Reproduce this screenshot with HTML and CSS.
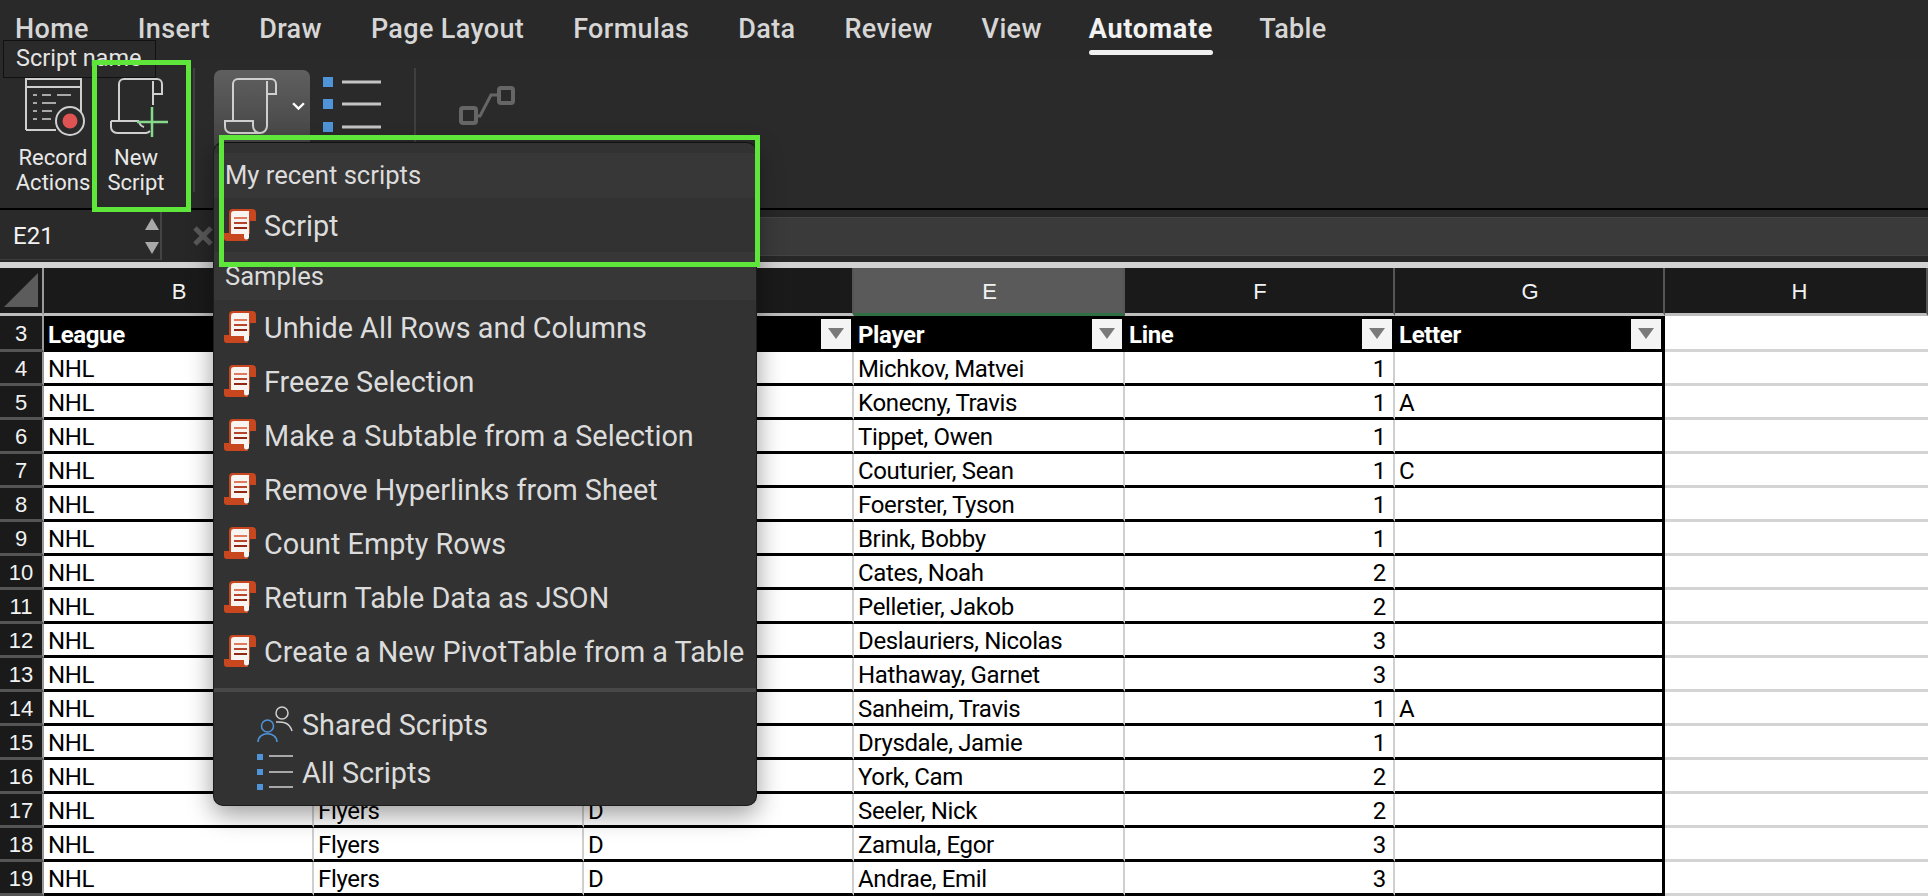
FILE: index.html
```html
<!DOCTYPE html>
<html lang="en">
<head>
<meta charset="utf-8">
<title>Automate tab</title>
<link rel="stylesheet" href="styles.css">
</head>
<body>
<svg class="defs" width="0" height="0">
  <symbol id="scroll" viewBox="0 0 60 60">
    <path d="M9 43V6a5 5 0 0 1 5-5h33a5 5 0 0 1 5 5v10h-9M43 3v45a7 7 0 0 1-7 7H7a6 6 0 0 1-6-6v-6h28v5a7 7 0 0 0 7 7" fill="none" stroke="currentColor" stroke-width="2"/>
  </symbol>
  <symbol id="doc" viewBox="0 0 32 32">
    <path d="M5 4a4 4 0 0 1 4-4h19a4 4 0 0 1 4 4v8h-6v13H5z" fill="#c9471f"/>
    <path d="M0 24h21l3 8H3a3 3 0 0 1-3-3z" fill="#c9471f"/>
    <path d="M10 2h15v26a2.500 2.500 0 0 1-5 0v-3H7V5a3 3 0 0 1 3-3z" fill="#f7f4f1"/>
    <rect x="10" y="8" width="13" height="2" fill="#e07a5c"/>
    <rect x="10" y="13" width="13" height="2" fill="#b5452a"/>
    <rect x="10" y="18" width="13" height="2" fill="#8f2712"/>
  </symbol>
</svg>

<header class="tabs">
  <span class="tab">Home</span><span class="tab">Insert</span><span class="tab">Draw</span><span class="tab">Page Layout</span><span class="tab">Formulas</span><span class="tab">Data</span><span class="tab">Review</span><span class="tab">View</span><span class="tab tab-active">Automate</span><span class="tab">Table</span>
</header>

<section class="ribbon">
  <div class="rib-btn rib-record">
    <svg class="ic-record" viewBox="0 0 62 60" width="62" height="60">
      <path d="M1 52V1h55v42M1 9h55M1 52h30" fill="none" stroke="#cfcfcf" stroke-width="2"/>
      <path d="M8 17h4M17 17h9M32 17h14M8 25h4M17 25h14M8 33h4M17 33h10M8 41h4M17 41h9" stroke="#a8a8a8" stroke-width="2"/>
      <circle cx="45" cy="43" r="14" fill="#2a2a2a" stroke="#cfcfcf" stroke-width="2"/>
      <circle cx="45" cy="43" r="7.500" fill="#e05353"/>
    </svg>
    <span class="rib-label">Record<br>Actions</span>
  </div>
  <div class="rib-btn rib-new">
    <svg class="ic-new" viewBox="0 0 60 60" width="60" height="60">
      <path d="M9 43V6a5 5 0 0 1 5-5h33a5 5 0 0 1 5 5v10h-9M43 3v24M1 43h28M1 43v6a6 6 0 0 0 6 6h29a7 7 0 0 0 4-2M29 43a7 7 0 0 0 5 6" fill="none" stroke="#cfcfcf" stroke-width="2"/>
      <path d="M42 29v30M27 44h31" fill="none" stroke="#86d98a" stroke-width="2.500"/>
    </svg>
    <span class="rib-label">New<br>Script</span>
  </div>
  <i class="rib-sep sep-a"></i>
  <div class="script-btn">
    <svg class="ic-scroll" width="60" height="60"><use href="#scroll"/></svg>
    <svg class="ic-chev" viewBox="0 0 12 8" width="13" height="9"><path d="M1 1l5 5 5-5" fill="none" stroke="#fff" stroke-width="2.200"/></svg>
  </div>
  <svg class="ic-list" viewBox="0 0 60 56" width="60" height="56">
    <rect x="0" y="0" width="10" height="10" fill="#4f94d8"/><rect x="0" y="22" width="10" height="10" fill="#4f94d8"/><rect x="0" y="45" width="10" height="10" fill="#4f94d8"/>
    <path d="M19 5h39M19 27h39M19 50h39" stroke="#c4c4c4" stroke-width="3"/>
  </svg>
  <i class="rib-sep sep-b"></i>
  <svg class="ic-flow" viewBox="0 0 56 40" width="56" height="40">
    <rect x="2" y="22" width="15" height="15" rx="2" fill="none" stroke="#666" stroke-width="4"/>
    <rect x="40" y="2" width="14" height="15" rx="2" fill="none" stroke="#666" stroke-width="4"/>
    <path d="M17 30h4l11-21h8" fill="none" stroke="#666" stroke-width="3"/>
  </svg>
</section>

<section class="formula">
  <div class="namebox">
    <span class="name-val">E21</span>
    <span class="spin"><i class="tri-up"></i><i class="tri-down"></i></span>
  </div>
  <svg class="fx-x" viewBox="0 0 20 20" width="20" height="20"><path d="M2 2l16 16M18 2L2 18" stroke="#5a5a5a" stroke-width="5"/></svg>
  <div class="fx-field"></div>
</section>

<main class="sheet">
  <table class="grid">
    <colgroup><col class="c-rh"><col class="c-n"><col class="c-n"><col class="c-n"><col class="c-e"><col class="c-n"><col class="c-n"><col></colgroup>
    <thead>
      <tr class="col-heads">
        <th class="corner"><i class="corner-tri"></i></th><th>B</th><th>C</th><th>D</th><th class="col-sel">E</th><th>F</th><th>G</th><th class="col-h">H</th>
      </tr>
    </thead>
    <tbody>
      <tr class="tbl-head">
        <th class="rh">3</th>
        <td><div class="hc"><span>League</span><i class="filter"></i></div></td>
        <td><div class="hc"><span></span><i class="filter"></i></div></td>
        <td><div class="hc"><span></span><i class="filter"></i></div></td>
        <td><div class="hc"><span>Player</span><i class="filter"></i></div></td>
        <td><div class="hc"><span>Line</span><i class="filter"></i></div></td>
        <td class="last"><div class="hc"><span>Letter</span><i class="filter"></i></div></td>
        <td class="free"></td>
      </tr>
      <tr><th class="rh">4</th><td>NHL</td><td></td><td></td><td>Michkov, Matvei</td><td class="num">1</td><td class="last"></td><td class="free"></td></tr>
      <tr><th class="rh">5</th><td>NHL</td><td></td><td></td><td>Konecny, Travis</td><td class="num">1</td><td class="last">A</td><td class="free"></td></tr>
      <tr><th class="rh">6</th><td>NHL</td><td></td><td></td><td>Tippet, Owen</td><td class="num">1</td><td class="last"></td><td class="free"></td></tr>
      <tr><th class="rh">7</th><td>NHL</td><td></td><td></td><td>Couturier, Sean</td><td class="num">1</td><td class="last">C</td><td class="free"></td></tr>
      <tr><th class="rh">8</th><td>NHL</td><td></td><td></td><td>Foerster, Tyson</td><td class="num">1</td><td class="last"></td><td class="free"></td></tr>
      <tr><th class="rh">9</th><td>NHL</td><td></td><td></td><td>Brink, Bobby</td><td class="num">1</td><td class="last"></td><td class="free"></td></tr>
      <tr><th class="rh">10</th><td>NHL</td><td></td><td></td><td>Cates, Noah</td><td class="num">2</td><td class="last"></td><td class="free"></td></tr>
      <tr><th class="rh">11</th><td>NHL</td><td></td><td></td><td>Pelletier, Jakob</td><td class="num">2</td><td class="last"></td><td class="free"></td></tr>
      <tr><th class="rh">12</th><td>NHL</td><td></td><td></td><td>Deslauriers, Nicolas</td><td class="num">3</td><td class="last"></td><td class="free"></td></tr>
      <tr><th class="rh">13</th><td>NHL</td><td></td><td></td><td>Hathaway, Garnet</td><td class="num">3</td><td class="last"></td><td class="free"></td></tr>
      <tr><th class="rh">14</th><td>NHL</td><td></td><td></td><td>Sanheim, Travis</td><td class="num">1</td><td class="last">A</td><td class="free"></td></tr>
      <tr><th class="rh">15</th><td>NHL</td><td></td><td></td><td>Drysdale, Jamie</td><td class="num">1</td><td class="last"></td><td class="free"></td></tr>
      <tr><th class="rh">16</th><td>NHL</td><td></td><td></td><td>York, Cam</td><td class="num">2</td><td class="last"></td><td class="free"></td></tr>
      <tr><th class="rh">17</th><td>NHL</td><td>Flyers</td><td>D</td><td>Seeler, Nick</td><td class="num">2</td><td class="last"></td><td class="free"></td></tr>
      <tr><th class="rh">18</th><td>NHL</td><td>Flyers</td><td>D</td><td>Zamula, Egor</td><td class="num">3</td><td class="last"></td><td class="free"></td></tr>
      <tr><th class="rh">19</th><td>NHL</td><td>Flyers</td><td>D</td><td>Andrae, Emil</td><td class="num">3</td><td class="last"></td><td class="free"></td></tr>
    </tbody>
  </table>
</main>

<div class="tooltip">Script name</div>

<nav class="menu">
  <div class="menu-head head-first">My recent scripts</div>
  <div class="menu-item"><svg class="doc" width="32" height="32"><use href="#doc"/></svg>Script</div>
  <div class="menu-head head-second">Samples</div>
  <div class="menu-item"><svg class="doc" width="32" height="32"><use href="#doc"/></svg>Unhide All Rows and Columns</div>
  <div class="menu-item"><svg class="doc" width="32" height="32"><use href="#doc"/></svg>Freeze Selection</div>
  <div class="menu-item"><svg class="doc" width="32" height="32"><use href="#doc"/></svg>Make a Subtable from a Selection</div>
  <div class="menu-item"><svg class="doc" width="32" height="32"><use href="#doc"/></svg>Remove Hyperlinks from Sheet</div>
  <div class="menu-item"><svg class="doc" width="32" height="32"><use href="#doc"/></svg>Count Empty Rows</div>
  <div class="menu-item"><svg class="doc" width="32" height="32"><use href="#doc"/></svg>Return Table Data as JSON</div>
  <div class="menu-item"><svg class="doc" width="32" height="32"><use href="#doc"/></svg>Create a New PivotTable from a Table</div>
  <div class="menu-sep"></div>
  <div class="menu-link">
    <svg class="link-ic" viewBox="0 0 36 36" width="36" height="36">
      <circle cx="25" cy="7" r="6" fill="none" stroke="#cfcfcf" stroke-width="1.500"/>
      <path d="M19 16c5 0 13-1 16 9" fill="none" stroke="#cfcfcf" stroke-width="1.500"/>
      <circle cx="10.500" cy="20" r="6" fill="none" stroke="#4f94d8" stroke-width="1.500"/>
      <path d="M1 36c0-11 19-11 19 0" fill="none" stroke="#4f94d8" stroke-width="1.500"/>
    </svg>Shared Scripts
  </div>
  <div class="menu-link">
    <svg class="link-ic" viewBox="0 0 36 36" width="36" height="36">
      <rect x="0" y="0" width="6" height="6" fill="#4f94d8"/><rect x="0" y="15" width="6" height="6" fill="#4f94d8"/><rect x="0" y="30" width="6" height="6" fill="#4f94d8"/>
      <path d="M12 2h24M12 18h24M12 33h24" stroke="#cfcfcf" stroke-width="1.500"/>
    </svg>All Scripts
  </div>
</nav>

<div class="hl hl-new"></div>
<div class="hl hl-recent"></div>
</body>
</html>
```

FILE: styles.css
```css
* { box-sizing: border-box; }
html, body { margin: 0; height: 100%; }
body {
  width: 1928px;
  height: 896px;
  overflow: hidden;
  position: relative;
  background: #2a2a2a;
  font-family: "Roboto", "Liberation Sans", sans-serif;
  color: #e4e4e4;
  display: flex;
  flex-direction: column;
}
.defs { position: absolute; }

/* Tabs */
.tabs {
  height: 60px;
  flex: none;
  display: flex;
  align-items: flex-start;
  gap: 49px;
  padding: 12px 0 0 15px;
  background: #292929;
}
.tab { font-size: 27px; line-height: 34px; font-weight: 500; color: #d6d6d6; position: relative; letter-spacing: .35px; }
.tab-active { color: #f2f2f2; font-weight: 700; letter-spacing: .7px; margin: 0 -3px 0 -2px; }
.tab-active::after {
  content: "";
  position: absolute;
  left: 0; right: 0; top: 38px;
  height: 5px;
  border-radius: 3px;
  background: #f0f0f0;
}

/* Ribbon */
.ribbon {
  height: 148px;
  flex: none;
  display: flex;
  align-items: flex-start;
  padding-left: 8px;
  background: #2a2a2a;
}
.rib-btn { display: flex; flex-direction: column; align-items: center; padding-top: 18px; }
.rib-record { width: 90px; }
.ic-record { margin-left: 6px; }
.rib-new { width: 76px; }
.ic-new { margin-left: 8px; }
.rib-label { margin-top: 8px; font-size: 22px; line-height: 24.500px; text-align: center; color: #e8e8e8; }
.rib-sep { display: block; width: 2px; background: #3f3f3f; }
.sep-a { height: 124px; margin: 8px 0 0 19px; }
.sep-b { height: 74px; margin: 8px 0 0 31px; }
.script-btn {
  width: 96px;
  height: 76px;
  margin: 10px 0 0 19px;
  padding: 8px 0 0 10px;
  border-radius: 7px 7px 0 0;
  background: linear-gradient(#5f5f5f, #444);
  color: #cfcfcf;
  display: flex;
  align-items: flex-start;
}
.ic-chev { margin: 24px 0 0 8px; }
.ic-list { margin: 17px 0 0 13px; }
.ic-flow { margin: 26px 0 0 43px; }

/* Formula bar */
.formula {
  height: 54px;
  flex: none;
  display: flex;
  align-items: stretch;
  background: #272727;
  border-top: 2px solid #000;
}
.namebox {
  width: 162px;
  height: 50px;
  display: flex;
  align-items: center;
  justify-content: space-between;
  padding: 2px 0 0 13px;
  background: #2a2a2a;
  border-right: 2px solid #444;
  border-bottom: 1px solid #3c3c3c;
}
.name-val { font-size: 24px; color: #f2f2f2; }
.spin { display: flex; flex-direction: column; gap: 12px; margin-right: 1px; }
.tri-up, .tri-down { display: block; width: 0; height: 0; border-left: 7px solid transparent; border-right: 7px solid transparent; }
.tri-up { border-bottom: 12px solid #a8a8a8; }
.tri-down { border-top: 12px solid #a8a8a8; }
.fx-x { align-self: center; margin: 0 0 0 31px; }
.fx-field { flex: 1; margin: 7px 0 6px 30px; background: #3a3a3a; border: 1px solid #444; border-width: 1px 0; }

/* Sheet */
.sheet { flex: 1; border-top: 6px solid #d2d2d2; background: #fff; overflow: hidden; }
.grid {
  width: 1928px;
  table-layout: fixed;
  border-collapse: separate;
  border-spacing: 0;
  font-family: "Liberation Sans Narrow", "Roboto", sans-serif;
  font-size: 24px;
  letter-spacing: -.35px;
  color: #000;
}
.c-rh { width: 44px; }
.c-n { width: 270px; }
.c-e { width: 271px; }
.col-heads th {
  height: 48px;
  padding: 3px 0 0 2px;
  background: #1a1a1a;
  color: #f2f2f2;
  font-family: "Liberation Sans", sans-serif;
  font-size: 22px;
  letter-spacing: 0;
  font-weight: 400;
  text-align: center;
  border-right: 2px solid #555;
  border-bottom: 3px solid #bdbdbd;
}
.col-heads .col-h { padding-left: 8px; }
.col-heads .col-sel { background: #5a5a5a; border-bottom-color: #2f6f42; }
.col-heads .corner { position: relative; border-right-color: #9a9a9a; }
.corner-tri {
  position: absolute;
  left: 4px; bottom: 6px;
  width: 34px; height: 34px;
  background: #5c5c5c;
  clip-path: polygon(100% 0, 100% 100%, 0 100%);
}
tbody tr { height: 34px; }
tbody td {
  height: 34px;
  padding: 3px 6px 0 4px;
  background: #fff;
  border-right: 2px solid #cfcfcf;
  border-bottom: 3px solid #000;
  white-space: nowrap;
  overflow: hidden;
  line-height: 28px;
}
.rh {
  padding: 3px 0 0;
  background: #1a1a1a;
  color: #f2f2f2;
  font-family: "Liberation Sans", sans-serif;
  font-size: 22px;
  letter-spacing: 0;
  font-weight: 400;
  text-align: center;
  border-right: 2px solid #9a9a9a;
  border-bottom: 3px solid #555;
}
td.num { text-align: right; padding-right: 7px; }
td.last { border-right: 3px solid #000; }
tbody td.free { border-right: 0; border-bottom: 3px solid #d4d4d4; }
.tbl-head { height: 36px; }
.tbl-head td { height: 36px; background: #000; color: #fff; font-weight: 700; border-right-color: #000; padding: 2px 1px 0 4px; }
.tbl-head td.free { background: #fff; }
.hc { display: flex; justify-content: space-between; align-items: center; }
.hc span { padding-top: 2px; }
.filter {
  width: 30px; height: 30px;
  background: #f4f4f4;
  display: flex; align-items: center; justify-content: center;
}
.filter::before {
  content: "";
  border-left: 8px solid transparent;
  border-right: 8px solid transparent;
  border-top: 11px solid #7a7a7a;
}

/* Overlays */
.tooltip {
  position: absolute;
  left: 3px; top: 40px;
  width: 153px; height: 38px;
  padding-left: 12px;
  font-size: 23.500px;
  line-height: 34px;
  background: #2a2a2a;
  border: 1px solid #111;
  color: #e4e4e4;
}
.menu {
  position: absolute;
  left: 213px; top: 142px;
  width: 544px; height: 664px;
  padding-top: 10px;
  background: #323232;
  border: 1px solid #1c1c1c;
  border-top-color: #111;
  border-radius: 10px;
  box-shadow: 0 8px 26px rgba(0,0,0,.4);
  font-size: 28.800px;
  color: #dcdcdc;
}
.menu-head { font-size: 25.600px; padding-left: 11px; background: #373737; }
.head-first { height: 45px; line-height: 44px; }
.head-second { height: 48px; line-height: 49px; }
.menu-item { height: 54px; display: flex; align-items: center; padding-top: 2px; }
.menu-item .doc { margin: -2px 8px 0 10px; flex: none; }
.menu-sep { height: 4px; margin: 10px 0 8px; background: #484848; }
.menu-link { height: 48px; display: flex; align-items: center; padding: 2px 0 0 43px; gap: 9px; }
.link-ic { margin-top: -2px; }
.hl { position: absolute; border: 5px solid #5fe63b; }
.hl-new { left: 92px; top: 60px; width: 99px; height: 152px; }
.hl-recent { left: 219px; top: 135px; width: 541px; height: 132px; }
```
